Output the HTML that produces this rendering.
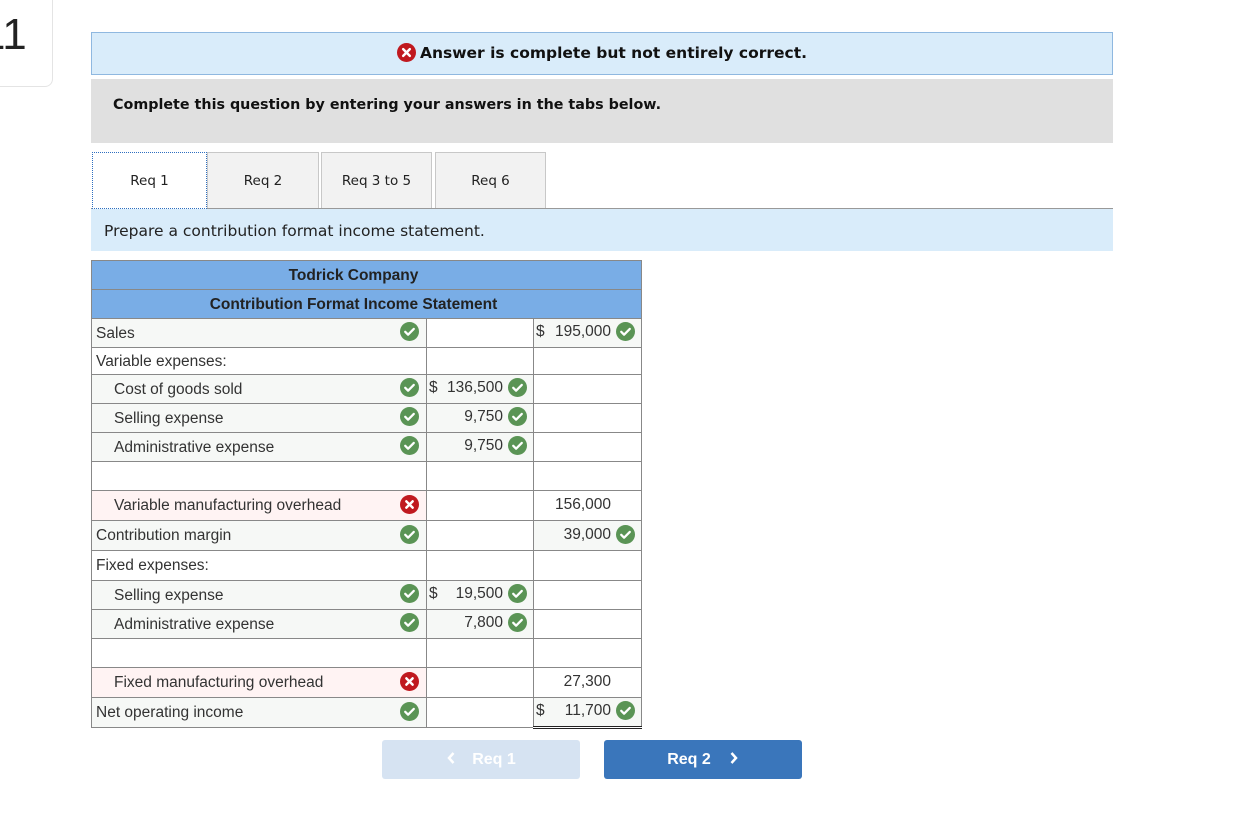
<!DOCTYPE html>
<html><head><meta charset="utf-8"><style>
*{margin:0;padding:0;box-sizing:border-box}
body{width:1235px;height:832px;background:#fff;position:relative;overflow:hidden;font-family:"DejaVu Sans",Verdana,sans-serif;color:#111}
.abs{position:absolute}
.num{left:-20px;top:-6px;width:73px;height:93px;border:1px solid #e4e4e4;border-radius:0 0 8px 0;font-family:"Liberation Sans",Arial,sans-serif;font-size:44px;color:#222;text-align:right;padding-right:30px;line-height:80px}
.banner{left:91px;top:32px;width:1022px;height:43px;background:#d9ecfa;border:1px solid #8fb8e0;text-align:center;font-weight:bold;font-size:15.5px;line-height:41px}
.q{left:91px;top:79px;width:1022px;height:64px;background:#e0e0e0;font-weight:bold;font-size:14.3px;padding:18px 22px}
.tab{top:152px;height:57px;background:#f2f2f2;border:1px solid #c8c8c8;border-bottom:none;font-size:13.5px;text-align:center;line-height:56px;color:#222}
.line{left:91px;top:208px;width:1022px;height:1px;background:#999}
.instr{left:91px;top:209px;width:1022px;height:42px;background:#d9ecfa;font-size:15.5px;padding:13px 13px;color:#222}
table{position:absolute;left:91px;top:260px;border-collapse:collapse;font-family:"Liberation Sans",Arial,sans-serif;font-size:15.5px;color:#333}
td{border:1px solid #888;padding:0;height:29px;line-height:17px;vertical-align:middle;white-space:nowrap}
.h td{background:#79ade6;font-weight:bold;text-align:center;color:#222;height:29px;padding-right:26px}
.c1{width:335px;position:relative}
.c2{width:107px;position:relative}
.c3{width:108px;position:relative}
.g{background:#f6f8f6}
.p{background:#fff3f3}
.lab{padding-left:4px}
.ind{padding-left:22px}
.ic{position:absolute;top:50%;margin-top:-11px;width:19px;height:19px}
.c1 .ic{right:7px}
.c2 .ic,.c3 .ic{right:6px}
.v{position:absolute;right:30px;top:50%;margin-top:-10px;line-height:18px}
.d{position:absolute;left:2px;top:50%;margin-top:-10px;line-height:18px}
.btn{top:740px;width:198px;height:39px;border-radius:3px;color:#fff;font-family:"Liberation Sans",Arial,sans-serif;font-weight:bold;font-size:16px;text-align:center;line-height:39px}
.btn svg{vertical-align:-1px}
</style></head><body>
<div class="abs num">11</div>
<div class="abs banner"><svg width="19" height="19" viewBox="0 0 20 20" style="vertical-align:-4px;margin-right:4px"><circle cx="10" cy="10" r="10" fill="#c0191f"/><path d="M6.5 6.5l7 7M13.5 6.5l-7 7" stroke="#fff" stroke-width="2.6" stroke-linecap="round"/></svg>Answer is complete but not entirely correct.</div>
<div class="abs q">Complete this question by entering your answers in the tabs below.</div>
<div class="abs tab" style="left:207px;width:112px">Req 2</div>
<div class="abs tab" style="left:321px;width:111px">Req 3 to 5</div>
<div class="abs tab" style="left:435px;width:111px">Req 6</div>
<div class="abs line"></div>
<div class="abs tab" style="left:92px;width:115px;background:#fff;border:1px dotted #2f6fc0;height:57px;z-index:2">Req 1</div>
<div class="abs instr">Prepare a contribution format income statement.</div>

<svg width="0" height="0" style="position:absolute"><defs>
<symbol id="ok" viewBox="0 0 20 20"><circle cx="10" cy="10" r="10" fill="#5a9455"/><path d="M5.5 10.3l3 3 6-6" fill="none" stroke="#fff" stroke-width="2.4" stroke-linecap="round" stroke-linejoin="round"/></symbol>
<symbol id="no" viewBox="0 0 20 20"><circle cx="10" cy="10" r="10" fill="#c0191f"/><path d="M6.7 6.7l6.6 6.6M13.3 6.7l-6.6 6.6" stroke="#fff" stroke-width="2.6" stroke-linecap="round"/></symbol>
</defs></svg>

<table>
<tr class="h"><td colspan="3">Todrick Company</td></tr>
<tr class="h"><td colspan="3">Contribution Format Income Statement</td></tr>
<tr><td class="c1 g lab">Sales<svg class="ic"><use href="#ok"/></svg></td><td class="c2"></td><td class="c3 g"><span class="d">$</span><span class="v">195,000</span><svg class="ic"><use href="#ok"/></svg></td></tr>
<tr style="height:27px"><td class="c1 lab" style="height:25px">Variable expenses:</td><td class="c2" style="height:25px"></td><td class="c3" style="height:25px"></td></tr>
<tr><td class="c1 g ind">Cost of goods sold<svg class="ic"><use href="#ok"/></svg></td><td class="c2 g"><span class="d">$</span><span class="v">136,500</span><svg class="ic"><use href="#ok"/></svg></td><td class="c3"></td></tr>
<tr><td class="c1 g ind">Selling expense<svg class="ic"><use href="#ok"/></svg></td><td class="c2 g"><span class="v">9,750</span><svg class="ic"><use href="#ok"/></svg></td><td class="c3"></td></tr>
<tr><td class="c1 g ind">Administrative expense<svg class="ic"><use href="#ok"/></svg></td><td class="c2 g"><span class="v">9,750</span><svg class="ic"><use href="#ok"/></svg></td><td class="c3"></td></tr>
<tr><td class="c1"></td><td class="c2"></td><td class="c3"></td></tr>
<tr><td class="c1 p ind" style="height:30px">Variable manufacturing overhead<svg class="ic"><use href="#no"/></svg></td><td class="c2"></td><td class="c3"><span class="v">156,000</span></td></tr>
<tr><td class="c1 g lab" style="height:30px">Contribution margin<svg class="ic"><use href="#ok"/></svg></td><td class="c2"></td><td class="c3 g" style="border-top:1.5px solid #222"><span class="v">39,000</span><svg class="ic"><use href="#ok"/></svg></td></tr>
<tr><td class="c1 lab" style="height:30px">Fixed expenses:</td><td class="c2"></td><td class="c3"></td></tr>
<tr><td class="c1 g ind">Selling expense<svg class="ic"><use href="#ok"/></svg></td><td class="c2 g"><span class="d">$</span><span class="v">19,500</span><svg class="ic"><use href="#ok"/></svg></td><td class="c3"></td></tr>
<tr><td class="c1 g ind">Administrative expense<svg class="ic"><use href="#ok"/></svg></td><td class="c2 g"><span class="v">7,800</span><svg class="ic"><use href="#ok"/></svg></td><td class="c3"></td></tr>
<tr><td class="c1"></td><td class="c2"></td><td class="c3"></td></tr>
<tr><td class="c1 p ind" style="height:30px">Fixed manufacturing overhead<svg class="ic"><use href="#no"/></svg></td><td class="c2"></td><td class="c3"><span class="v">27,300</span></td></tr>
<tr><td class="c1 g lab" style="height:30px">Net operating income<svg class="ic"><use href="#ok"/></svg></td><td class="c2"></td><td class="c3 g" style="border-top:1.5px solid #222;border-bottom:3px double #222"><span class="d">$</span><span class="v">11,700</span><svg class="ic"><use href="#ok"/></svg></td></tr>
</table>

<div class="abs btn" style="left:382px;background:#d6e3f2"><svg width="10" height="14" viewBox="0 0 10 14" style="margin-right:16px"><path d="M7.5 2L3 7l4.5 5" fill="none" stroke="#fff" stroke-width="2.5"/></svg>Req 1</div>
<div class="abs btn" style="left:604px;background:#3a76bb">Req 2<svg width="10" height="14" viewBox="0 0 10 14" style="margin-left:18px"><path d="M2.5 2L7 7l-4.5 5" fill="none" stroke="#fff" stroke-width="2.5"/></svg></div>
</body></html>
